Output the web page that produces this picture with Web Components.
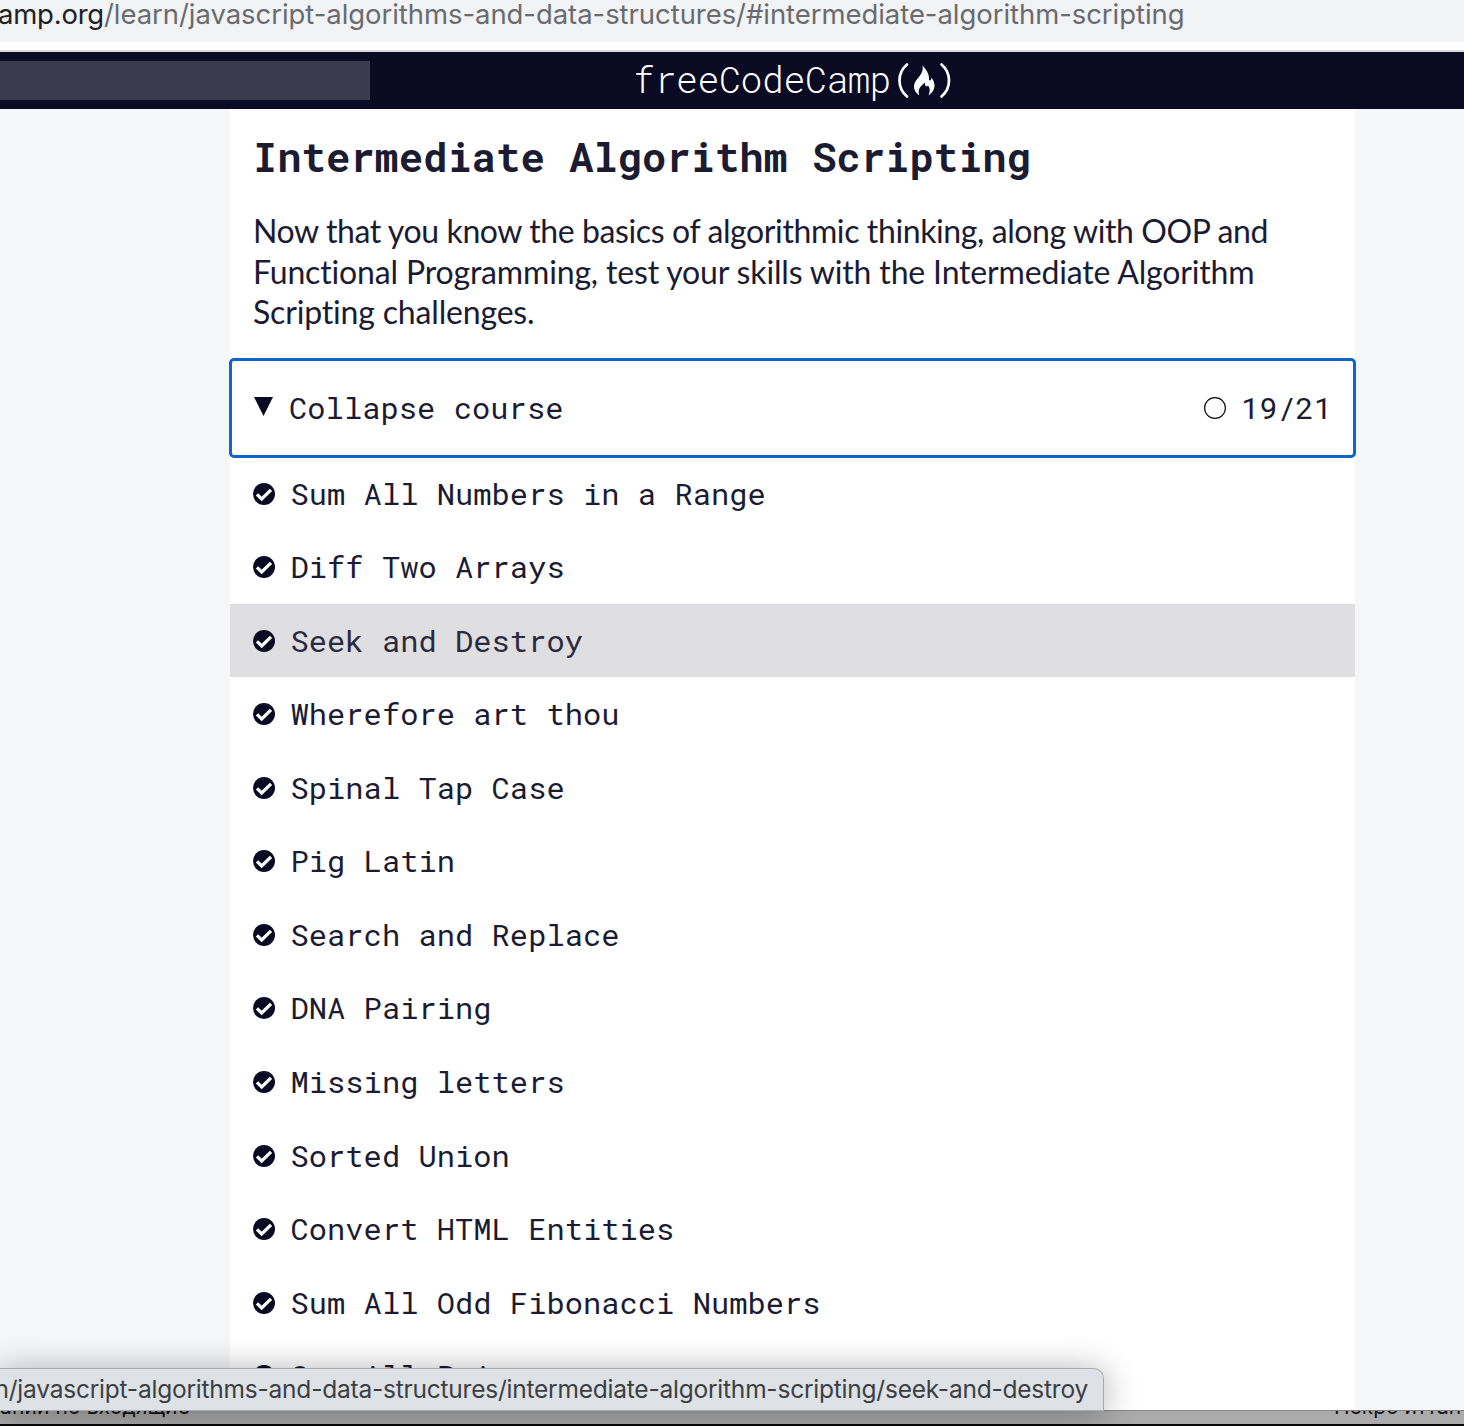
<!DOCTYPE html>
<html lang="en">
<head>
<meta charset="utf-8">
<title>Intermediate Algorithm Scripting</title>
<style>
html,body{margin:0;height:100%;overflow:hidden}
body{font-family:Lato,sans-serif;color:#1b1b32}
</style>
</head>
<body>
<camp-page></camp-page>
<script>
const define=(name,html,ready)=>customElements.define(name,class extends HTMLElement{
  constructor(){super();this.attachShadow({mode:'open'}).innerHTML=html}
  connectedCallback(){if(ready)ready(this)}
});

/* One line of text whose tracking is spread to fill a given width. */
define('fit-text',`<style>:host{display:inline-block;white-space:pre}</style><slot></slot>`,el=>{
  const n=el.textContent.length,w=el.getBoundingClientRect().width;
  el.style.letterSpacing=((+el.getAttribute('width')-w)/n)+'px';
});

define('address-bar',`<style>
:host{display:block;height:50px;box-sizing:border-box;border-bottom:8px solid #fff;background:#f1f3f4;overflow:hidden;font:27.5px/28px Inter,sans-serif;color:#696b6e;white-space:nowrap}
.line{display:flex}
.host{color:#202124;width:104px;display:flex;justify-content:flex-end;flex:none}
</style><div class="line"><span class="host"><fit-text width="106">amp.org</fit-text></span><fit-text width="1080.5">/learn/javascript-algorithms-and-data-structures/#intermediate-algorithm-scripting</fit-text></div>`);

define('camp-header',`<style>
:host{display:grid;grid-template-columns:633px auto 1fr;height:57px;border-top:2px solid #d9dce0;background:#0a0a23;color:#fff}
.search{width:370px;height:39px;margin-top:9px;background:#3b3b4f}
.logo{display:flex;height:54px;align-items:center}
fit-text{font:300 36.5px/52px "Roboto Mono","Liberation Mono",monospace}
svg{display:block}
</style><div class="search"></div><div class="logo"><fit-text width="258">freeCodeCamp</fit-text>
<svg width="62" height="54" viewBox="0 0 62 54"><g fill="none" stroke="#fff" stroke-width="2.7" stroke-linecap="round"><path d="M16 12.5C6 21 6 36 16 44.500M50.500 12.500C60.500 21 60.500 36 50.500 44.500"/></g><path fill="#fff" d="M31.500 13.500C35.500 18 38.500 22 38 28C39.600 29.300 40.500 27.500 40.500 25.500C44.500 31 45.500 38 37.500 43.500C39.500 38.500 39 35.500 36.800 33.500C35.500 36 33.200 33 34 30.500C29 34.500 26.500 37.500 28.300 43.500C21.500 38.500 21.800 32 26.200 27C30.300 22.300 32.500 19 31.500 13.500Z"/></svg></div>`);

define('course-toggle',`<style>
:host{display:flex;box-sizing:border-box;height:100px;margin:0 -1px;padding:0 21px 0 22px;border:3px solid #1263cc;border-radius:5px;align-items:center;justify-content:space-between;font:30.4px/38px "Roboto Mono","DejaVu Sans Mono",monospace;position:relative;z-index:1}
div{display:flex;align-items:center;height:40px}svg{display:block}
fit-text{height:40px}
.arrow{margin:-4px 16px 0 0}.ring{margin-right:15px}
</style><div><svg class="arrow" width="19" height="19"><path fill="#0a0a23" d="M0 0H19L9.500 19Z"/></svg><fit-text width="274.5">Collapse course</fit-text></div>
<div><svg class="ring" width="22" height="22"><circle cx="11" cy="11" r="10.400" fill="none" stroke="#0a0a23" stroke-width="1.200"/></svg><fit-text width="91">19/21</fit-text></div>`);

define('lesson-row',`<style>
:host{display:flex;height:73.55px;align-items:center;padding-left:23px;font:30.4px/38px "Roboto Mono","DejaVu Sans Mono",monospace;white-space:pre}
:host([active]){background:#dfdfe1;color:#2a2a40}
svg{margin:0 15.500px 0 0;flex:none}
slot{display:block;height:40px}
</style><svg width="22" height="22" viewBox="0 0 22 22"><circle cx="11" cy="11" r="11" fill="#0a0a23"/><path d="M4 11.300L8.700 16L18 6.800" fill="none" stroke="#fff" stroke-width="3.200"/></svg><slot></slot>`,el=>{
  const t=document.createElement('fit-text');
  t.setAttribute('width',el.textContent.length*18.28);
  t.textContent=el.textContent;el.replaceChildren(t);
});

define('course-block',`<style>
:host{display:block;width:1125px;height:1301px;margin-left:230px;background:#fff;overflow:visible}
header{height:249px;padding:23px 24px 0 23px;box-sizing:border-box}
h2{margin:0 0 29px;font:700 40.5px/50px "Roboto Mono","DejaVu Sans Mono",monospace}
p{margin:0;display:flex;flex-direction:column;align-items:flex-start;font-size:32px;line-height:40.5px}
.rows{margin-top:-1.200px}
</style><header><h2><fit-text width="778">Intermediate Algorithm Scripting</fit-text></h2>
<p><fit-text width="1015">Now that you know the basics of algorithmic thinking, along with OOP and</fit-text><fit-text width="1002">Functional Programming, test your skills with the Intermediate Algorithm</fit-text><fit-text width="282">Scripting challenges.</fit-text></p></header>
<course-toggle></course-toggle><div class="rows">${['Sum All Numbers in a Range','Diff Two Arrays','Seek and Destroy','Wherefore art thou','Spinal Tap Case','Pig Latin','Search and Replace','DNA Pairing','Missing letters','Sorted Union','Convert HTML Entities','Sum All Odd Fibonacci Numbers','Sum All Primes'].map((t,i)=>`<lesson-row${i===2?' active':''}>${t}</lesson-row>`).join('')}</div>`);

define('status-bubble',`<style>
:host{position:absolute;left:0;top:1368px;width:1104px;height:43px;box-sizing:border-box;border:solid #a9abae;border-width:1px 1px 1px 0;border-radius:0 10px 0 0;background:#dee1e6;color:#3c4043;font:24.5px/41px Inter,sans-serif;display:flex;justify-content:flex-end;padding-right:15px;white-space:nowrap;box-shadow:0 3px 34px #0005}
</style><fit-text width="1093.5">n/javascript-algorithms-and-data-structures/intermediate-algorithm-scripting/seek-and-destroy</fit-text>`);

define('desktop-edge',`<style>
:host{display:flex;justify-content:space-between;box-sizing:border-box;height:16px;overflow:hidden;border-top:1px solid #858585;border-bottom:2px solid #080808;background:#ababab;color:#111;font:21px/24px Inter,sans-serif;white-space:nowrap}
span{margin-top:-16px}.right{width:130px}
</style><span><fit-text width="190">ании по входящие</fit-text></span><span class="right">Некро иттап</span>`);

define('camp-page',`<style>
:host{display:block;position:relative;width:1464px;height:1426px;background:#f5f6f7;overflow:hidden}
main{height:1301px;overflow:hidden}
</style><address-bar></address-bar><camp-header></camp-header><main><course-block></course-block></main><desktop-edge></desktop-edge><status-bubble></status-bubble>`);
</script>
</body>
</html>
